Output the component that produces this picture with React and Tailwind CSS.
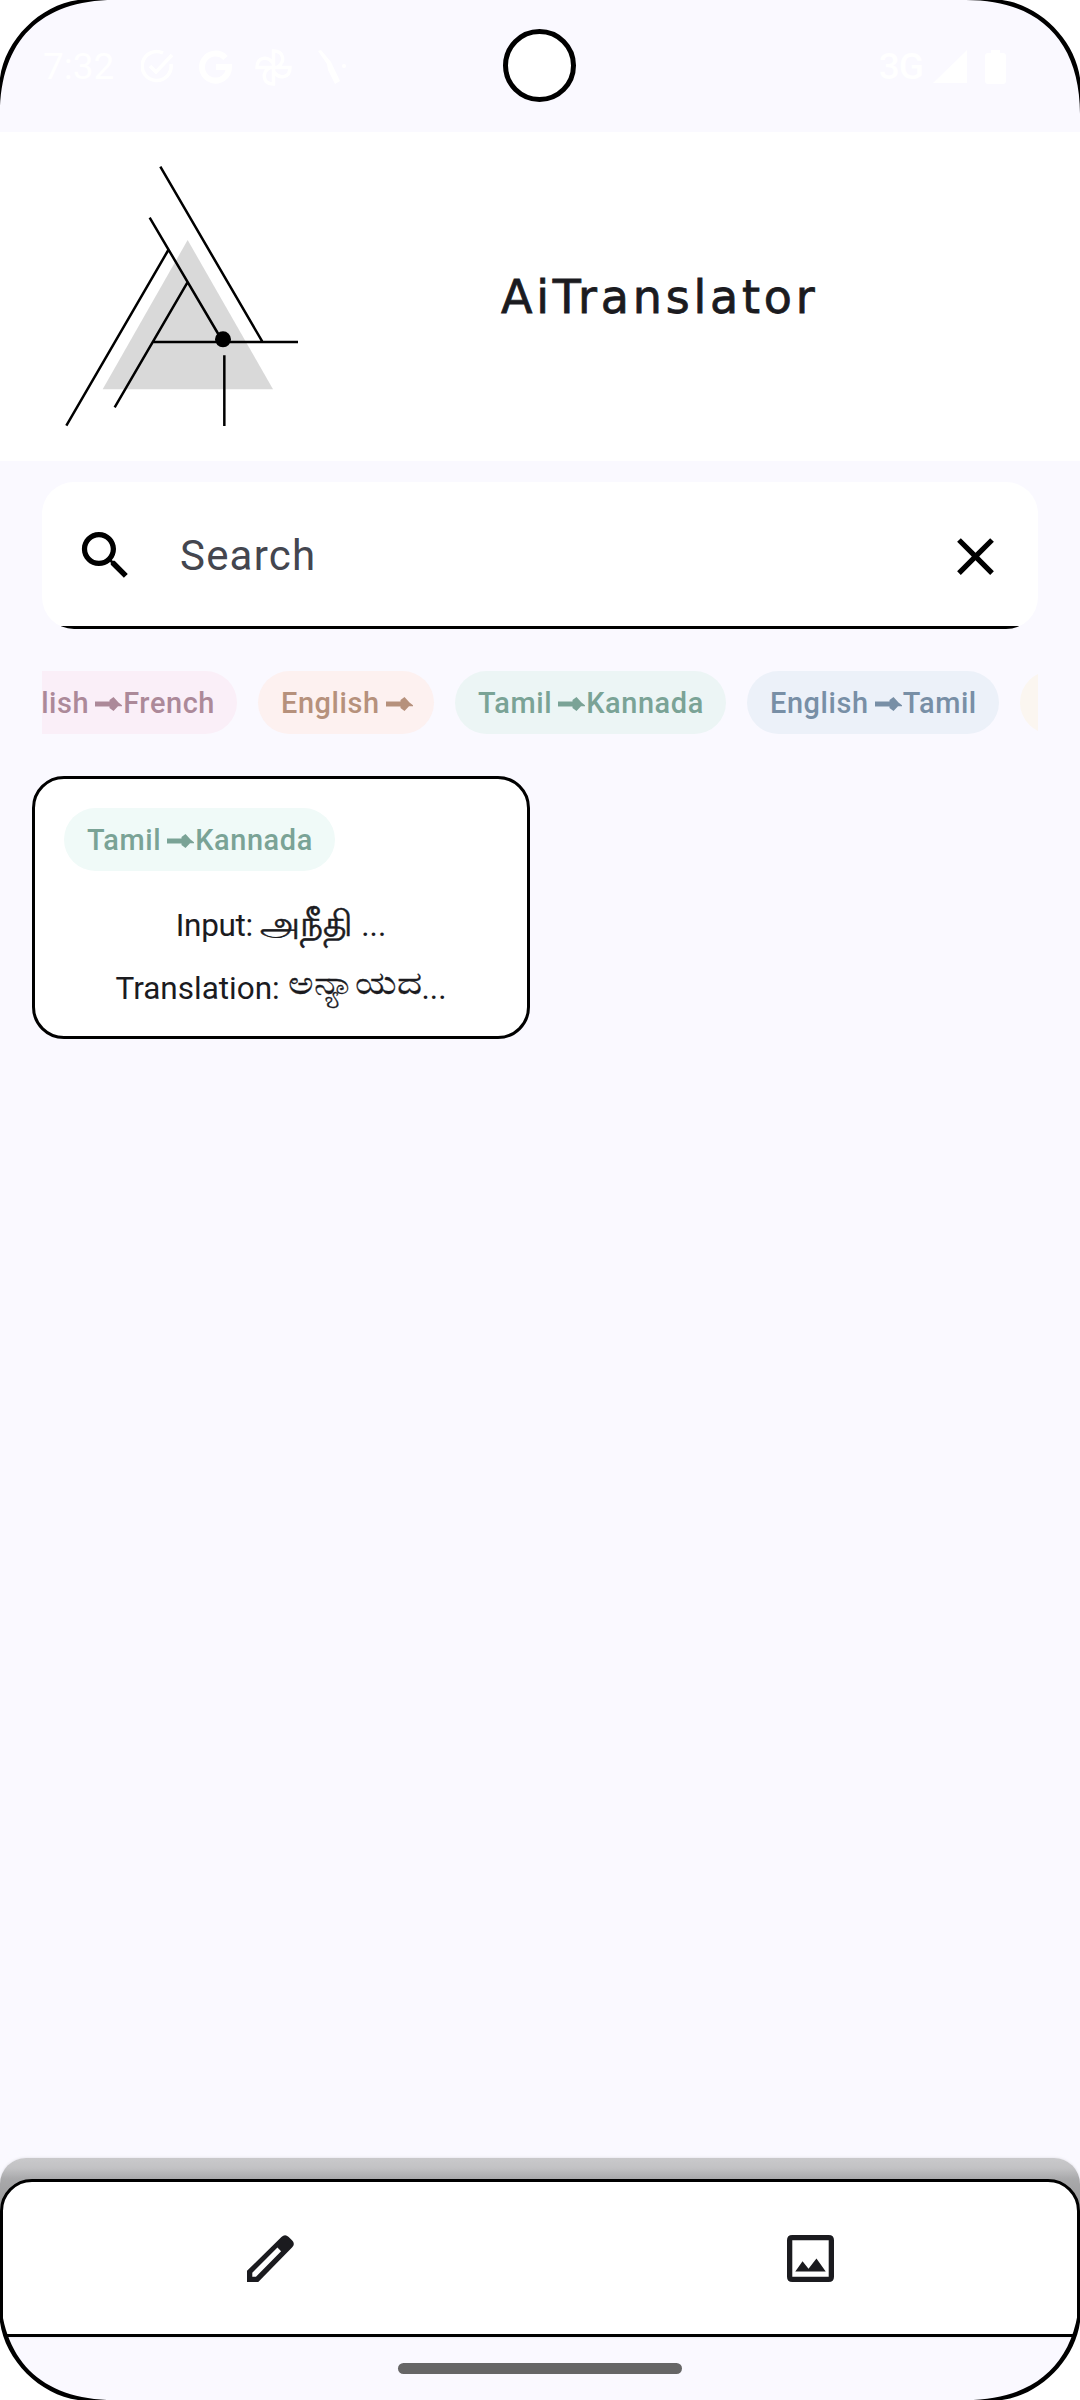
const FONT = "font-['Roboto','Noto_Sans',sans-serif]";

function Corner({ className }) {
  return (
    <svg className={className} width="118" height="118" viewBox="0 0 118 118">
      <path d="M0 0H114C41 0 0 41 0 114Z" fill="#000" />
      <path d="M0 0H78C40 5 5 40 0 78Z" fill="#fff" />
    </svg>
  );
}

function StatusBar() {
  return (
    <header className="relative flex h-[132px] items-center pt-[2px] text-white">
      <span className="ml-[43px] w-[98px] text-[37px] leading-[44px]">7:32</span>
      <svg className="h-[36px] w-[34px]" viewBox="0 0 34 36" fill="none" stroke="#fff" strokeWidth="3.6">
        <path d="M22 4A14.5 14.5 0 1 0 30 15" />
        <path d="M9 17L15 23L31 6" />
      </svg>
      <svg className="ml-[24px] h-[34px] w-[33px]" viewBox="0 0 33 34" fill="none" stroke="#fff" strokeWidth="6">
        <path d="M26.500 8A13.500 13.500 0 1 0 30 17H17" />
      </svg>
      <svg className="ml-[23px] h-[37px] w-[37px]" viewBox="0 0 37 37" fill="none" stroke="#fff" strokeWidth="3.400">
        <path d="M18.500 18.500V2C29 2 31 13 22 18.500M18.500 18.500H35C35 29 24 31 18.500 22M18.500 18.500V35C8 35 6 24 15 18.500M18.500 18.500H2C2 8 13 6 18.500 15" />
      </svg>
      <svg className="ml-[26px] h-[34px] w-[30px]" viewBox="0 0 30 34" fill="#fff">
        <path d="M0 1L3 0L13 12L22 31L17 34L10 20L9 14Z" />
        <circle cx="26" cy="16" r="2" />
      </svg>
      <div className="ml-auto mr-[74px] flex items-center">
        <span className="text-[37px] font-medium leading-[44px] tracking-[-1px]">3G</span>
        <svg className="ml-[10px] h-[34px] w-[34px]" viewBox="0 0 34 34" fill="#fff">
          <path d="M34 0V33H0Z" />
        </svg>
        <svg className="ml-[18px] h-[34px] w-[21px]" viewBox="0 0 21 34" fill="#fff">
          <path d="M6 0H15V3H18Q21 3 21 6V31Q21 34 18 34H3Q0 34 0 31V6Q0 3 3 3H6Z" />
        </svg>
      </div>
      <div className="absolute left-[503px] top-[29px] h-[73px] w-[73px] rounded-full border-[5px] border-black bg-white" />
    </header>
  );
}

function Logo() {
  return (
    <svg className="ml-[40px] h-[320px] w-[290px] shrink-0" viewBox="0 0 870 960" fill="none" stroke="#000" strokeWidth="7.500">
      <path d="M443 300L699 748H188Z" fill="#d9d9d9" stroke="none" />
      <path d="M361 80L667 605M329 233L549 606M385 330L79 857M442 428L224 802M338 606H774M553 646V858" />
      <circle cx="549" cy="598" r="24" fill="#000" stroke="none" />
    </svg>
  );
}

function Arrow() {
  return (
    <svg className="mr-[1px] ml-[6px] h-[14px] w-[27px] shrink-0" viewBox="0 0 27 14" fill="currentColor">
      <path d="M0 4.500H14.500V3L18.500 0L23.500 5.500L27 8.300V9.300H23L18.500 14L14.500 11V9.500H0Z" />
    </svg>
  );
}

function Chip({ from, to, className }) {
  return (
    <div className={`flex h-[63px] shrink-0 items-center rounded-full pt-[2px] text-[28.9px] font-medium tracking-[0.6px] ${className}`}>
      <span>{from}</span>
      <Arrow />
      <span>{to}</span>
    </div>
  );
}

function SearchBox() {
  return (
    <div className="mx-[42px] mt-[21px] flex h-[147px] flex-col overflow-hidden rounded-[32px] bg-white">
      <div className="flex flex-1 items-center pt-[3px]">
        <svg className="ml-[32px] h-[63px] w-[63px]" viewBox="0 0 24 24" fill="#000">
          <path d="M15.500 14h-.790l-.280-.270C15.410 12.590 16 11.110 16 9.500 16 5.910 13.090 3 9.500 3S3 5.910 3 9.500 5.910 16 9.500 16c1.610 0 3.090-.590 4.230-1.570l.270.280v.790l5 4.990L20.490 19l-4.990-5zm-6 0C7.010 14 5 11.990 5 9.500S7.010 5 9.500 5 14 7.010 14 9.500 11.990 14 9.500 14z" />
        </svg>
        <span className="ml-[43px] flex-1 text-[42px] leading-[63px] tracking-[1.2px] text-[#44464f]">Search</span>
        <svg className="mr-[31px] mt-px h-[63px] w-[63px]" viewBox="0 0 24 24" fill="#000">
          <path d="M19 6.410L17.590 5 12 10.590 6.410 5 5 6.410 10.590 12 5 17.590 6.410 19 12 13.410 17.590 19 19 17.590 13.410 12z" />
        </svg>
      </div>
      <div className="h-[3px] bg-black" />
    </div>
  );
}

function BottomBar() {
  return (
    <nav className="mt-auto h-[179px] rounded-t-[26px] bg-[linear-gradient(to_bottom,#c9c9cb_0px,#c2c2c4_10px,#a9a9ab_21px,#999_50px,#faf9ff_90px)] pt-[21px] shadow-[0_0_3px_rgba(0,0,0,0.12)]">
      <div className="flex h-[158px] items-center rounded-t-[32px] border-[3px] border-black bg-white pt-px">
        <div className="-ml-[2px] flex flex-1 justify-center">
          <svg className="h-[47px] w-[47px]" viewBox="0 0 142 142" fill="#1b1b1f" fillRule="evenodd">
            <path d="M0 108L104 6Q115 -5 126 6L136 16Q147 27 136 38L34 142H0ZM16 114V126H27L103 49L92 38Z" />
          </svg>
        </div>
        <div className="-mr-[3px] flex flex-1 justify-center">
          <svg className="h-[47px] w-[47px]" viewBox="0 0 142 142" fill="#1b1b1f" fillRule="evenodd">
            <path d="M16 0H126Q142 0 142 16V126Q142 142 126 142H16Q0 142 0 126V16Q0 0 16 0ZM16 16V126H126V16ZM25 110L47 79L65 102L89 71L117 110Z" />
          </svg>
        </div>
      </div>
    </nav>
  );
}

export default function App() {
  return (
    <div className={`relative flex h-[2400px] w-[1080px] flex-col overflow-hidden bg-[#faf9ff] ${FONT}`}>
      <StatusBar />
      <div className="flex h-[329px] bg-white pt-[8px]">
        <Logo />
        <h1 className="ml-[171px] mt-[129px] whitespace-nowrap font-['DejaVu_Sans',sans-serif] text-[46px] leading-[56px] tracking-[3.800px] text-[#1b1b1f] [-webkit-text-stroke:0.8px_#1b1b1f]">
          AiTranslator
        </h1>
      </div>
      <SearchBox />
      <div className="mx-[42px] mt-[42px] flex h-[63px] gap-[21px] overflow-hidden">
        <Chip from="English" to="French" className="-ml-[81px] w-[276px] justify-end bg-[#faeff8] pr-[22px] text-[#ac8999]" />
        <Chip from="English" to="" className="w-[176px] bg-[#fdf1f0] pl-[23px] text-[#b6917c]" />
        <Chip from="Tamil" to="Kannada" className="w-[271px] bg-[#ecf5f5] pl-[23px] text-[#7aa396]" />
        <Chip from="English" to="Tamil" className="w-[252px] bg-[#ecf1f9] pl-[23px] text-[#788fa6]" />
        <div className="h-[63px] w-[200px] shrink-0 rounded-full bg-[#fbf6f0]" />
      </div>
      <div className="ml-[32px] mt-[42px] h-[263px] w-[498px] rounded-[32px] border-[3px] border-black bg-white px-[29px] pt-[29px]">
        <Chip from="Tamil" to="Kannada" className="w-[271px] bg-[#f0faf8] pl-[23px] text-[#7aa396]" />
        <div className="mt-[22px] text-center text-[31.500px] leading-[63px] text-[#1b1b1f]">
          <p className="flex h-[63px] items-baseline justify-center whitespace-pre">
            <span className="tracking-[-0.3px]">Input: </span>
            <span className="text-[35.500px] [-webkit-text-stroke:0.6px_#1b1b1f]">அநீதி</span>
            <span> ...</span>
          </p>
          <p className="-mt-px flex h-[63px] items-baseline justify-center whitespace-pre">
            <span>Translation: </span>
            <span className="-translate-y-[3px] scale-y-[0.85] text-[39px] [-webkit-text-stroke:0.3px_#1b1b1f]">ಅನ್ಯಾಯದ</span>
            <span>...</span>
          </p>
        </div>
      </div>
      <BottomBar />
      <div className="flex h-[63px] shrink-0 items-start justify-center pt-[26px]">
        <div className="h-[11px] w-[284px] rounded-full bg-[#666]" />
      </div>
      <Corner className="absolute left-0 top-0" />
      <Corner className="absolute right-0 top-0 -scale-x-100" />
      <Corner className="absolute bottom-0 left-0 -scale-y-100" />
      <Corner className="absolute bottom-0 right-0 -scale-100" />
    </div>
  );
}
